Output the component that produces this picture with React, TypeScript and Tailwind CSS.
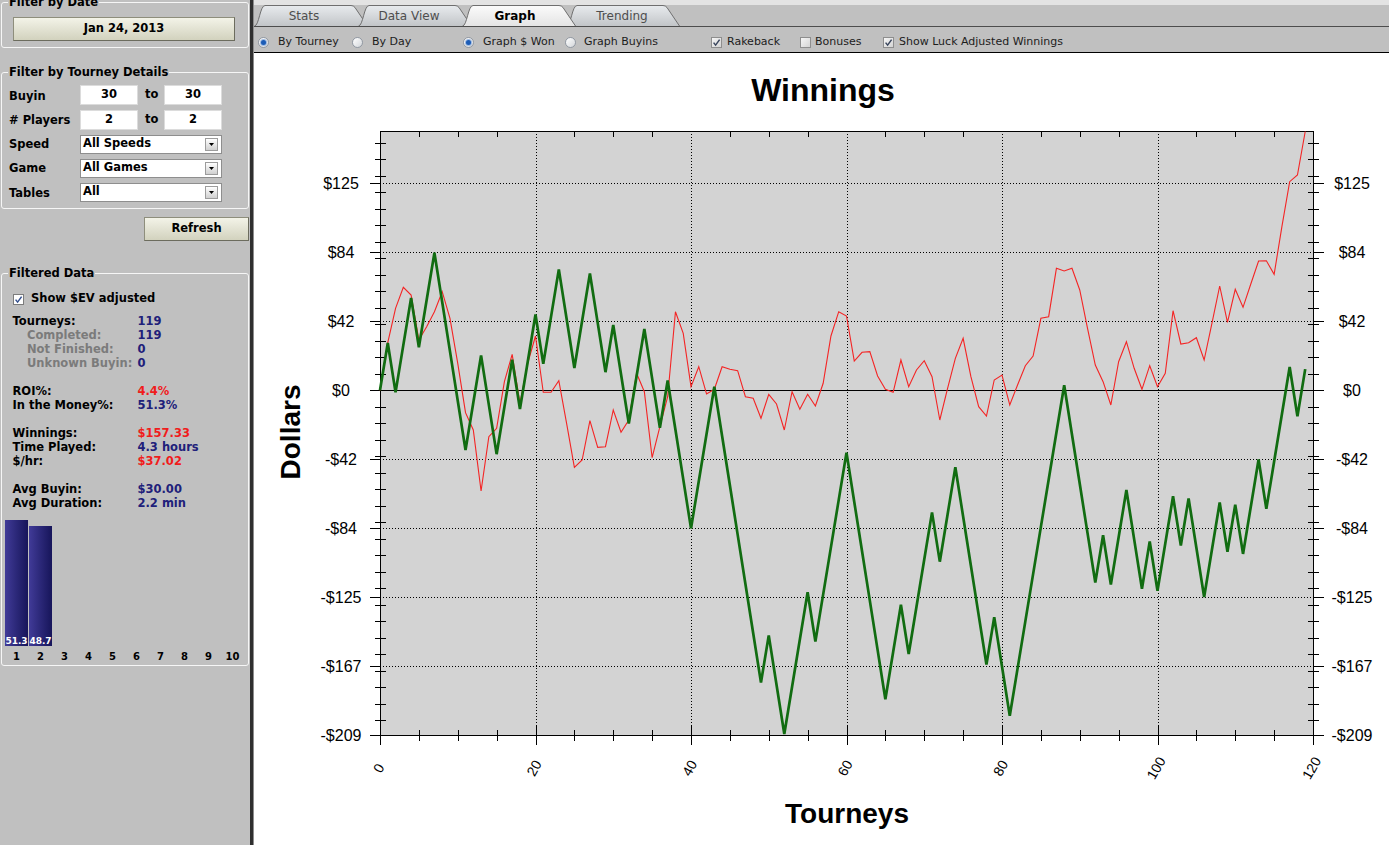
import React from "react";

const SEQ =
  "WLWWLWWLLLLWWLLWWLWW" +
  "LWWLLWWLLWLLWWLLWLLL" +
  "WWWLLLLLLWLLWWWLWWWW" +
  "LLLLLWWLWWWLWWLLLLWL" +
  "LWWWWWWWLLLLWLWWLLWL" +
  "WWLWLLWWLWLWWLWWWLW";

const RED_Y = [
  390.3, 342.7, 308.3, 287.3, 295, 340, 326.7, 311.7, 291.7, 318.3,
  363.3, 412.7, 430, 491, 436.7, 428.3, 381.7, 354.3, 403.3, 363.3,
  336, 392.3, 392.3, 380.7, 423.3, 467.3, 460, 420.7, 447.3, 446.7,
  410, 432.3, 420, 373.3, 391.7, 457.7, 426.7, 396.7, 311.7, 333.3,
  386.7, 366.7, 394, 389.3, 366.7, 369.3, 370.7, 396.7, 398.3, 418.3,
  394.3, 404, 430, 391.7, 409.3, 394.3, 406, 383.3, 336, 311.7,
  316, 361, 352.3, 351.7, 376, 389.3, 392.3, 360, 386.7, 370,
  360.7, 376.7, 420, 388.3, 358.3, 338.3, 376.7, 406.7, 416, 380,
  375, 405, 385, 365.7, 356, 318.3, 316.7, 268.3, 271, 268.3,
  290, 328.3, 365, 381.7, 405, 361.7, 341.7, 368.3, 389.3, 365.7,
  386.7, 373.3, 310.7, 344, 342.7, 337.7, 360, 323.3, 286, 322.3,
  289.3, 307.3, 284, 261, 260.7, 274.3, 226.7, 181.7, 175, 131.5,
];

const X0 = 380;
const X1 = 1313;
const Y0 = 131;
const Y1 = 735;
const ZERO = 390.3;
const K = 1.6493;
const xOf = (i: number) => X0 + (i * (X1 - X0)) / 120;
const yOf = (v: number) => ZERO - v * K;
const px = (n: number) => Math.round(n) + 0.5;

function greenPoints() {
  let v = 0;
  const pts: string[] = [`${xOf(0)},${yOf(0)}`];
  for (let i = 0; i < SEQ.length; i++) {
    v += SEQ[i] === "W" ? 28.64 : -29.9;
    pts.push(`${xOf(i + 1).toFixed(2)},${yOf(v).toFixed(2)}`);
  }
  return pts.join(" ");
}

const redPoints = RED_Y.map((y, i) => `${xOf(i).toFixed(2)},${y}`).join(" ");

const MAJORS = [
  { v: 125.4, l: "$125" },
  { v: 83.6, l: "$84" },
  { v: 41.8, l: "$42" },
  { v: 0, l: "$0" },
  { v: -41.8, l: "-$42" },
  { v: -83.6, l: "-$84" },
  { v: -125.4, l: "-$125" },
  { v: -167.2, l: "-$167" },
  { v: -209, l: "-$209" },
];

const FONT = "'Liberation Sans', Arial, sans-serif";

function Chart() {
  const minorY: number[] = [];
  for (let v = -200; v <= 150; v += 10) minorY.push(v);
  const minorX: number[] = [];
  for (let i = 5; i < 120; i += 5) if (i % 20 !== 0) minorX.push(i);
  const majorX = [0, 20, 40, 60, 80, 100, 120];
  return (
    <svg width={1135} height={792} viewBox="254 53 1135 792" className="block">
      <text x={823} y={101} textAnchor="middle" fontFamily={FONT} fontWeight="bold" fontSize={32} fill="#000">
        Winnings
      </text>
      <rect x={X0} y={Y0} width={X1 - X0} height={Y1 - Y0} fill="#d3d3d3" />
      <g stroke="#000" strokeWidth={1} shapeRendering="crispEdges" fill="none">
        {MAJORS.filter((m) => m.v !== 0 && m.v !== -209).map((m) => (
          <line key={m.l} x1={X0} x2={X1} y1={px(yOf(m.v))} y2={px(yOf(m.v))} strokeDasharray="1 2" />
        ))}
        {[20, 40, 60, 80, 100].map((i) => (
          <line key={i} x1={px(xOf(i))} x2={px(xOf(i))} y1={Y0} y2={Y1} strokeDasharray="1 2" />
        ))}
        <line x1={X0} x2={X1} y1={px(ZERO)} y2={px(ZERO)} />
        <line x1={X0} x2={X1 + 1} y1={Y0 + 0.5} y2={Y0 + 0.5} />
        <line x1={X0} x2={X1 + 1} y1={Y1 + 0.5} y2={Y1 + 0.5} />
        <line x1={X0 + 0.5} x2={X0 + 0.5} y1={Y0} y2={Y1 + 1} />
        <line x1={X1 + 0.5} x2={X1 + 0.5} y1={Y0} y2={Y1 + 1} />
        {minorY.map((v) => (
          <g key={v}>
            <line x1={375} x2={386} y1={px(yOf(v))} y2={px(yOf(v))} />
            <line x1={1308} x2={1319} y1={px(yOf(v))} y2={px(yOf(v))} />
          </g>
        ))}
        {MAJORS.map((m) => (
          <g key={m.l}>
            <line x1={370} x2={381} y1={px(yOf(m.v))} y2={px(yOf(m.v))} />
            <line x1={1313} x2={1324} y1={px(yOf(m.v))} y2={px(yOf(m.v))} />
          </g>
        ))}
        {minorX.map((i) => (
          <g key={i}>
            <line x1={px(xOf(i))} x2={px(xOf(i))} y1={730} y2={741} />
            <line x1={px(xOf(i))} x2={px(xOf(i))} y1={131} y2={137} />
          </g>
        ))}
        {majorX.map((i) => (
          <line key={i} x1={px(xOf(i))} x2={px(xOf(i))} y1={725} y2={745} />
        ))}
      </g>
      <polyline points={redPoints} fill="none" stroke="#f42424" strokeWidth={1.1} strokeLinejoin="miter" />
      <polyline points={greenPoints()} fill="none" stroke="#116c11" strokeWidth={2.7} strokeLinejoin="miter" strokeMiterlimit={3} />
      <g fontFamily={FONT} fontSize={16} fontWeight="normal" fill="#000" textAnchor="middle">
        {MAJORS.map((m) => (
          <g key={m.l}>
            <text x={341} y={yOf(m.v) + 5.6}>{m.l}</text>
            <text x={1352} y={yOf(m.v) + 5.6}>{m.l}</text>
          </g>
        ))}
      </g>
      <g fontFamily={FONT} fontSize={14} fontWeight="normal" fill="#000">
        {majorX.map((i) => {
          const cx = xOf(i) - 1.5;
          return (
            <text key={i} x={cx} y={768} textAnchor="middle" dominantBaseline="central" transform={`rotate(-60 ${cx} 768)`}>
              {i}
            </text>
          );
        })}
      </g>
      <text x={847} y={823} textAnchor="middle" fontFamily={FONT} fontWeight="bold" fontSize={28} fill="#000">
        Tourneys
      </text>
      <text x={300} y={432} textAnchor="middle" fontFamily={FONT} fontWeight="bold" fontSize={28} fill="#000" transform="rotate(-90 300 432)">
        Dollars
      </text>
    </svg>
  );
}

function Radio({ on }: { on: boolean }) {
  return (
    <span className="flex h-[11px] w-[11px] shrink-0 items-center justify-center rounded-full border border-[#9299a3] bg-linear-to-br from-white to-[#d3d6da]">
      {on && <span className="h-[5px] w-[5px] rounded-full bg-[#1c5cb6] shadow-[0_0_0_1px_#9db9e0]" />}
    </span>
  );
}

function Check({ on }: { on: boolean }) {
  return (
    <span className="flex h-[11px] w-[11px] shrink-0 items-center justify-center border border-[#8e8e8e] bg-linear-to-br from-[#f6f6f6] to-[#d4d4d4]">
      {on && (
        <svg width="9" height="9" viewBox="0 0 9 9">
          <path d="M1.6 4.6 L3.6 7.1 L7.6 1.6" fill="none" stroke="#3a465e" strokeWidth="1.5" />
        </svg>
      )}
    </span>
  );
}

function DropBtn() {
  return (
    <span className="flex h-[13px] w-[13px] items-center justify-center border border-[#9c9c9c] bg-linear-to-b from-white to-[#d0d0d0]">
      <svg width="5" height="3" viewBox="0 0 5 3">
        <path d="M0 0H5L2.5 3Z" fill="#000" />
      </svg>
    </span>
  );
}

function Input({ children }: { children: React.ReactNode }) {
  return (
    <div className="flex h-[20px] w-[58px] items-center justify-center border border-[#dcdcdc] bg-white">{children}</div>
  );
}

function Select({ children }: { children: React.ReactNode }) {
  return (
    <div className="flex h-[19px] w-[142px] items-center justify-between border border-[#8e8e8e] bg-white pl-[2px] pr-[3px]">
      <span>{children}</span>
      <DropBtn />
    </div>
  );
}

type StatRow = { l?: string; v?: string; sub?: boolean; red?: boolean };

const STATS: StatRow[] = [
  { l: "Tourneys:", v: "119" },
  { l: "Completed:", v: "119", sub: true },
  { l: "Not Finished:", v: "0", sub: true },
  { l: "Unknown Buyin:", v: "0", sub: true },
  {},
  { l: "ROI%:", v: "4.4%", red: true },
  { l: "In the Money%:", v: "51.3%" },
  {},
  { l: "Winnings:", v: "$157.33", red: true },
  { l: "Time Played:", v: "4.3 hours" },
  { l: "$/hr:", v: "$37.02", red: true },
  {},
  { l: "Avg Buyin:", v: "$30.00" },
  { l: "Avg Duration:", v: "2.2 min" },
];

const BARS = [51.3, 48.7, 0, 0, 0, 0, 0, 0, 0, 0];

function Sidebar() {
  return (
    <aside className="flex w-[250px] shrink-0 flex-col">
      <fieldset className="-mt-[5px] ml-[1px] w-[248px] rounded-[3px] border border-[#f6f6f6] pb-[6px] pt-[8px]">
        <legend className="ml-[6px] px-[1px] leading-[14px]">Filter by Date</legend>
        <div className="ml-[11px] flex h-[24px] w-[222px] items-center justify-center border border-[#8e8e7c] border-b-[#6c6c5e] border-r-[#6c6c5e] bg-linear-to-b from-[#f3f3e8] to-[#d2d2be]">
          Jan 24, 2013
        </div>
      </fieldset>

      <fieldset className="ml-[1px] mt-[17px] w-[248px] rounded-[3px] border border-[#f6f6f6] pb-[6px] pt-[6px]">
        <legend className="ml-[6px] px-[1px] leading-[14px]">Filter by Tourney Details</legend>
        <div className="flex h-[20px] items-center pl-[7px]">
          <span className="mt-[3px] w-[71px]">Buyin</span>
          <Input>30</Input>
          <span className="w-[26px] pl-[7px]">to</span>
          <Input>30</Input>
        </div>
        <div className="mt-[5px] flex h-[20px] items-center pl-[7px]">
          <span className="mt-[2px] w-[71px]"># Players</span>
          <Input>2</Input>
          <span className="w-[26px] pl-[7px]">to</span>
          <Input>2</Input>
        </div>
        <div className="mt-[4px] flex h-[20px] items-center pl-[7px]">
          <span className="mt-[2px] w-[71px]">Speed</span>
          <Select>All Speeds</Select>
        </div>
        <div className="mt-[4px] flex h-[20px] items-center pl-[7px]">
          <span className="mt-[2px] w-[71px]">Game</span>
          <Select>All Games</Select>
        </div>
        <div className="mt-[4px] flex h-[20px] items-center pl-[7px]">
          <span className="mt-[3px] w-[71px]">Tables</span>
          <Select>All</Select>
        </div>
      </fieldset>

      <div className="ml-[144px] mt-[8px] flex h-[24px] w-[105px] items-center justify-center border border-[#8e8e7c] border-b-[#6c6c5e] border-r-[#6c6c5e] bg-linear-to-b from-[#f3f3e8] to-[#d2d2be]">
        Refresh
      </div>

      <fieldset className="ml-[1px] mt-[25px] w-[248px] rounded-[3px] border border-[#f6f6f6] pb-[3px] pt-[12px]">
        <legend className="ml-[6px] px-[1px] leading-[14px]">Filtered Data</legend>
        <div className="flex h-[14px] items-center pl-[11px]">
          <span className="flex h-[11px] w-[11px] items-center justify-center border border-[#7c7c7c] bg-white">
            <svg width="9" height="9" viewBox="0 0 9 9">
              <path d="M1.6 4.6 L3.6 7.1 L7.6 1.6" fill="none" stroke="#34508e" strokeWidth="1.5" />
            </svg>
          </span>
          <span className="ml-[7px]">Show $EV adjusted</span>
        </div>
        <div className="mt-[8px]">
          {STATS.map((r, i) => (
            <div key={i} className="flex h-[14px] items-center pl-[10.5px] leading-[14px]">
              {r.l && (
                <>
                  <span className={r.sub ? "w-[125px] pl-[14.5px] text-[#7b7b7b]" : "w-[125px]"}>{r.l}</span>
                  <span className={r.red ? "text-[#f01c1c]" : "text-[#20207a]"}>{r.v}</span>
                </>
              )}
            </div>
          ))}
        </div>
        <div className="mt-[10px] flex h-[126px] items-end pl-[3px]">
          {BARS.map((b, i) => (
            <div key={i} className="flex w-[24px] items-end">
              {b > 0 && (
                <div
                  className="flex w-[23px] items-end justify-center bg-linear-to-r from-[#413b98] to-[#17155a] text-[9px] leading-[10px] text-white"
                  style={{ height: `${b * 2.456}px` }}
                >
                  {b.toFixed(1)}
                </div>
              )}
            </div>
          ))}
        </div>
        <div className="mt-[4px] flex h-[12px] items-center pl-[3px] text-[10px]">
          {BARS.map((_, i) => (
            <span key={i} className="w-[24px] pr-[1px] text-center">
              {i + 1}
            </span>
          ))}
        </div>
      </fieldset>
    </aside>
  );
}

const TABS = [
  { label: "Stats", active: false, cls: "relative z-[1] flex h-[21px] w-[114px] items-center justify-center pl-[6px] pr-[20px]" },
  { label: "Data View", active: false, cls: "relative z-[2] -ml-[10px] flex h-[21px] w-[114px] items-center justify-center pl-[6px] pr-[18px]" },
  { label: "Graph", active: true, cls: "relative z-[10] -ml-[10px] flex h-[21px] w-[114px] items-center justify-center pl-[8px] pr-[16px]" },
  { label: "Trending", active: false, cls: "relative z-[3] -ml-[10px] flex h-[21px] w-[114px] items-center justify-center pl-[10px] pr-[12px]" },
];

function TabStrip() {
  return (
    <div className="flex h-[27px] items-end border-b border-t-[5px] border-b-[#4d4d4d] border-t-[#e3e3e3] bg-[#c0c0c0]">
      {TABS.map((t, i) => (
        <div key={t.label} className={t.cls}>
          <svg className="absolute inset-0" width="114" height="21" viewBox="0 0 114 21">
            <defs>
              <linearGradient id={`tabg${i}`} x1="0" y1="0" x2="0" y2="1">
                <stop offset="0" stopColor={t.active ? "#fbfbfb" : "#e8ebee"} />
                <stop offset="1" stopColor={t.active ? "#e4e4e4" : "#c2c5c8"} />
              </linearGradient>
            </defs>
            <path d="M0.5,21 C5,21 6,0.5 11,0.5 L97,0.5 Q99.5,0.5 101,2.5 L113.5,21 Z" fill={`url(#tabg${i})`} />
            <path d="M0.5,21 C5,21 6,0.5 11,0.5 L97,0.5 Q99.5,0.5 101,2.5 L113.5,21" fill="none" stroke="#6f6f6f" strokeWidth="1" />
          </svg>
          <span className={t.active ? "relative text-[12px] font-bold text-black" : "relative text-[12px] font-normal text-[#4e4e4e]"}>
            {t.label}
          </span>
        </div>
      ))}
    </div>
  );
}

function OptionBar() {
  return (
    <div className="flex h-[26px] items-center border-b border-b-black bg-[#c0c0c0] pl-[4px] pt-[6px] text-[11px] font-normal text-[#1c1c1c]">
      <div className="flex w-[94px] items-center">
        <Radio on />
        <span className="ml-[9px]">By Tourney</span>
      </div>
      <div className="flex w-[111px] items-center">
        <Radio on={false} />
        <span className="ml-[9px]">By Day</span>
      </div>
      <div className="flex w-[102px] items-center">
        <Radio on />
        <span className="ml-[9px]">Graph $ Won</span>
      </div>
      <div className="flex w-[146px] items-center">
        <Radio on={false} />
        <span className="ml-[8px]">Graph Buyins</span>
      </div>
      <div className="flex w-[89px] items-center">
        <Check on />
        <span className="ml-[5px]">Rakeback</span>
      </div>
      <div className="flex w-[83px] items-center">
        <Check on={false} />
        <span className="ml-[4px]">Bonuses</span>
      </div>
      <div className="flex items-center">
        <Check on />
        <span className="ml-[5px]">Show Luck Adjusted Winnings</span>
      </div>
    </div>
  );
}

export default function App() {
  return (
    <div className="flex h-[845px] w-[1389px] overflow-hidden bg-[#c0c0c0] font-['DejaVu_Sans',sans-serif] text-[11.5px] font-bold text-black">
      <Sidebar />
      <div className="w-[3px] shrink-0 bg-[#2f2f2f]" />
      <main className="flex min-w-0 flex-1 flex-col border-l border-l-[#8d8d8d]">
        <TabStrip />
        <OptionBar />
        <div className="flex-1 overflow-hidden bg-white">
          <Chart />
        </div>
      </main>
    </div>
  );
}
